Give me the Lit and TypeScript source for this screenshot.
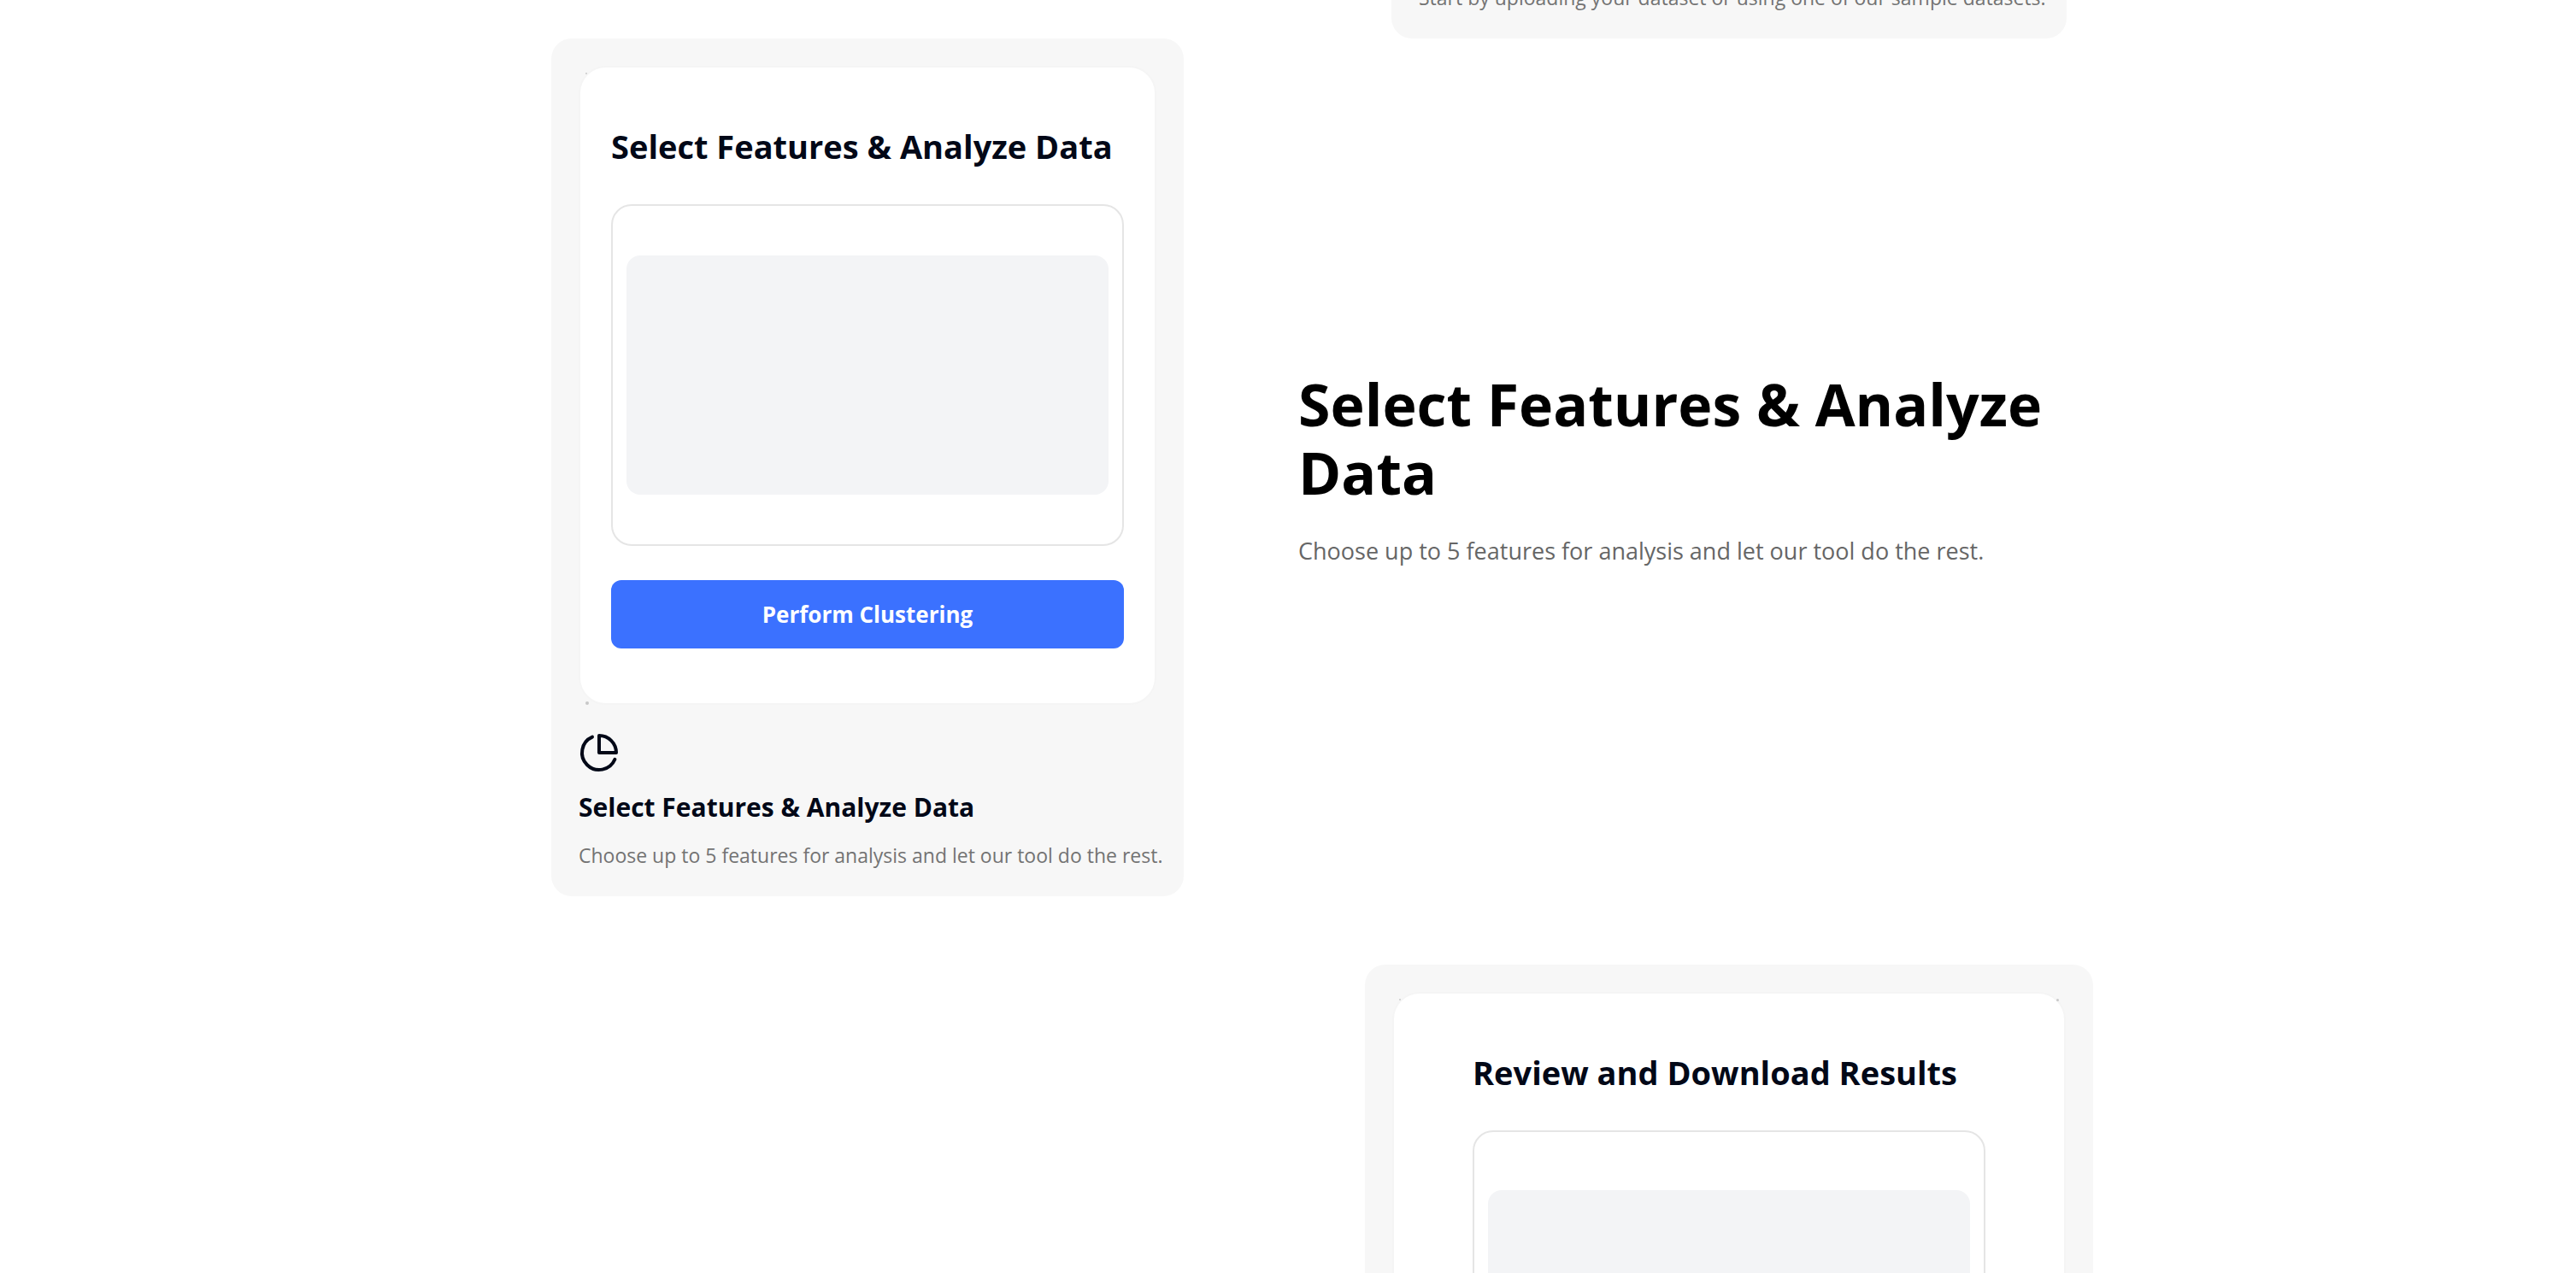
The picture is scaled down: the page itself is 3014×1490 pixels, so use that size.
import { LitElement, html, css, nothing } from "lit";
import { customElement, property } from "lit/decorators.js";

@customElement("feature-card")
class FeatureCard extends LitElement {
  @property() heading = "";
  @property() description = "";
  @property() action = "";

  static styles = css`
    :host {
      display: block;
      box-sizing: border-box;
      padding: 32px;
      border-radius: 24px;
      background: #f7f7f7;
      color: #020817;
    }
    .preview {
      position: relative;
      display: flex;
      justify-content: center;
      box-sizing: border-box;
      padding: 64px 0;
      margin-bottom: 32px;
      border: 2px solid #f5f5f5;
      border-radius: 32px;
      background: #ffffff;
    }
    .speck {
      position: absolute;
      width: 3px;
      height: 3px;
      border-radius: 50%;
      background: #c8c8c8;
    }
    .bottom-left { left: 6px; bottom: -2px; width: 4px; height: 4px; }
    .top-left { left: 6px; top: 6px; width: 2px; height: 2px; }
    .top-right { right: 6px; top: 6px; }
    .content {
      width: 600px;
      max-width: 100%;
    }
    .title {
      margin: 0 0 40px;
      font-size: 38px;
      line-height: 56px;
      font-weight: 700;
      white-space: nowrap;
    }
    .frame {
      display: flex;
      align-items: center;
      box-sizing: border-box;
      height: var(--frame-height, 400px);
      padding: 0 16px;
      border: 2px solid #e5e5e5;
      border-radius: 24px;
    }
    .placeholder {
      flex: 1;
      height: 280px;
      border-radius: 16px;
      background: #f3f4f6;
    }
    .action {
      display: block;
      width: 100%;
      height: 80px;
      margin-top: 40px;
      padding: 0;
      border: 0;
      border-radius: 12px;
      background: #3b71ff;
      color: #ffffff;
      font: 700 26px/40px "Open Sans", "Noto Sans", sans-serif;
    }
    .icon {
      display: block;
      width: 48px;
      height: 48px;
      margin-bottom: 16px;
    }
    .heading {
      margin: 0 0 16px;
      font-size: 30px;
      line-height: 48px;
      font-weight: 700;
      white-space: nowrap;
    }
    .description {
      margin: 0;
      color: #737373;
      font-size: 23px;
      line-height: 32px;
      white-space: nowrap;
    }
  `;

  render() {
    return html`
      ${this.heading
        ? html`
            <div class="preview">
              <i class="speck top-left"></i>
              ${this.action
                ? html`<i class="speck bottom-left"></i>`
                : html`<i class="speck top-right"></i>`}
              <div class="content">
                <h3 class="title">${this.heading}</h3>
                <div class="frame"><div class="placeholder"></div></div>
                ${this.action
                  ? html`<button class="action" type="button">${this.action}</button>`
                  : nothing}
              </div>
            </div>
            <svg class="icon" viewBox="0 0 24 24" fill="none" stroke="currentColor"
              stroke-width="2" stroke-linecap="round" stroke-linejoin="round" aria-hidden="true">
              <path d="M21.21 15.89A10 10 0 1 1 8 2.83"></path>
              <path d="M22 12A10 10 0 0 0 12 2v10z"></path>
            </svg>
            <h4 class="heading">${this.heading}</h4>
          `
        : nothing}
      <p class="description">${this.description}</p>
    `;
  }
}

@customElement("app-root")
class AppRoot extends LitElement {
  static styles = css`
    :host {
      display: block;
      height: 100vh;
      overflow: hidden;
      background: #ffffff;
      font-family: "Open Sans", "Noto Sans", sans-serif;
    }
    .steps {
      box-sizing: border-box;
      max-width: 2040px;
      margin: 0 auto;
      padding-left: 24px;
    }
    .step {
      display: grid;
      grid-template-columns: 1fr 1fr;
      align-items: center;
      justify-items: center;
    }
    .upload { margin-top: -51px; }
    .review { margin-top: 80px; }
    .right { grid-column: 2; }
    feature-card { width: 100%; }
    .upload feature-card { max-width: 790px; }
    .select feature-card { max-width: 740px; }
    .review feature-card {
      max-width: 852px;
      --frame-height: 420px;
    }
    .text {
      justify-self: stretch;
      padding-top: 4px;
    }
    .headline {
      margin: 0 0 32px;
      color: #000000;
      font-size: 68px;
      line-height: 80px;
      font-weight: 700;
    }
    .lead {
      margin: 0;
      color: #666666;
      font-size: 27px;
      line-height: 40px;
    }
  `;

  render() {
    return html`
      <main class="steps">
        <section class="step upload">
          <feature-card class="right"
            description="Start by uploading your dataset or using one of our sample datasets."></feature-card>
        </section>
        <section class="step select">
          <feature-card
            heading="Select Features &amp; Analyze Data"
            action="Perform Clustering"
            description="Choose up to 5 features for analysis and let our tool do the rest."></feature-card>
          <div class="text">
            <h2 class="headline">Select Features &amp; Analyze Data</h2>
            <p class="lead">Choose up to 5 features for analysis and let our tool do the rest.</p>
          </div>
        </section>
        <section class="step review">
          <feature-card class="right" heading="Review and Download Results"></feature-card>
        </section>
      </main>
    `;
  }
}
